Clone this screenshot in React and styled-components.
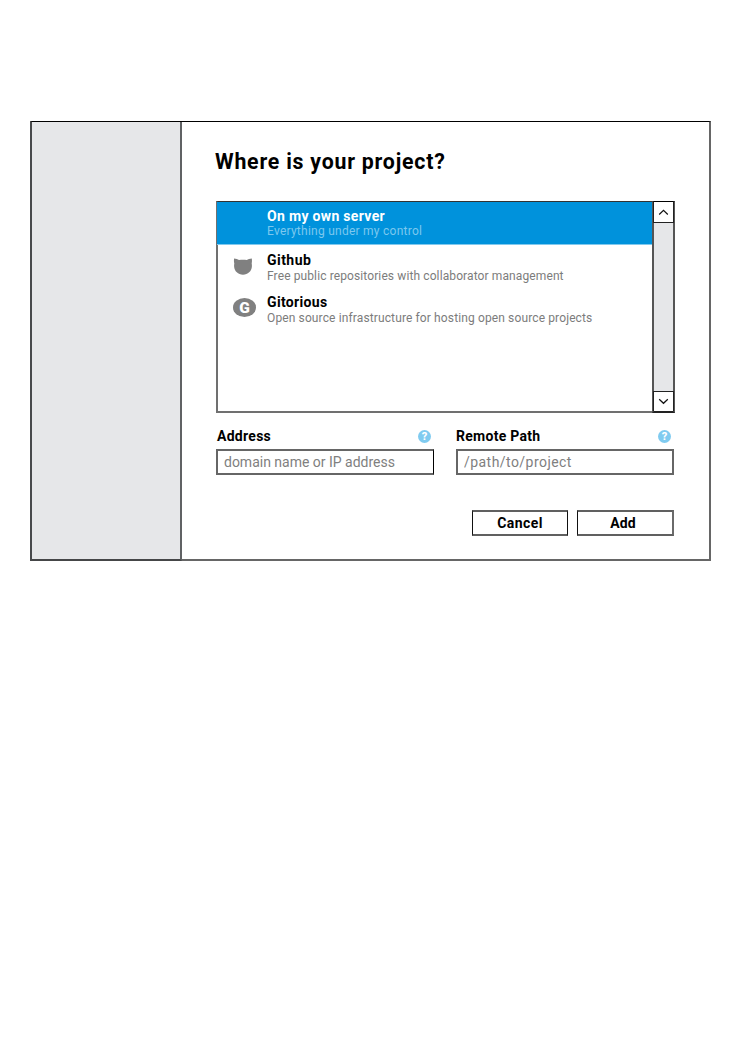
import React from "react";
import styled, { createGlobalStyle } from "styled-components";

const GlobalStyle = createGlobalStyle`
  *, *::before, *::after { box-sizing: border-box; }
  body { margin: 0; background: #fff; color: #000; font-family: Roboto, "Liberation Sans", sans-serif; }
`;

const Page = styled.main`
  padding: 121px 0 0 30px;
`;

const Dialog = styled.section`
  display: flex;
  width: 681px;
  height: 440px;
  border: solid #666;
  border-width: 1px 2px 2px;
  border-top-color: #000;
`;

const Sidebar = styled.aside`
  width: 152px;
  margin: 0 0 -2px -2px;
  background: #e6e7e9;
  border: 2px solid #606264;
  border-left-color: #484a4c;
  border-bottom-color: #454648;
  border-top: 0;
`;

const Content = styled.div`
  display: flex;
  flex-direction: column;
  width: 493px;
  padding: 27px 0 0 34px;
`;

const Title = styled.h1`
  margin: 0 0 26px -1px;
  font-size: 21.3px;
  line-height: 26px;
  font-weight: 700;
  letter-spacing: 0.78px;
  white-space: nowrap;
`;

const ListBox = styled.div`
  display: flex;
  height: 212px;
`;

const Options = styled.ul`
  flex: 1;
  margin: 0;
  padding: 0;
  list-style: none;
  border: solid #707070;
  border-width: 1px 0 2px 2px;
  border-top-color: #333;
`;

const Option = styled.li`
  display: grid;
  grid-template-columns: 49px 1fr;
  height: 42px;
  padding-top: 7px;
  color: #000;
  ${({ $selected }) =>
    $selected &&
    `
    height: 43px;
    margin-left: -1px;
    padding: 6px 0 0 1px;
    color: #fff;
    background: #0092dc;
    border-bottom: 1px solid #80c9ee;
  `}
`;

const OptionIcon = styled.div`
  padding: ${({ $pad }) => $pad || "0"};
  svg { display: block; }
`;

const OptionName = styled.div`
  font-size: 14px;
  line-height: 16px;
  font-weight: 700;
  letter-spacing: ${({ $tracking }) => $tracking}px;
`;

const OptionNote = styled.div`
  padding-top: ${({ $selected }) => ($selected ? 0 : 1)}px;
  font-size: 12px;
  line-height: 14px;
  letter-spacing: ${({ $tracking }) => $tracking}px;
  color: ${({ $selected }) => ($selected ? "#7cc8ee" : "#7c7c7c")};
  white-space: nowrap;
`;

const Scrollbar = styled.div`
  display: flex;
  flex-direction: column;
  justify-content: space-between;
  width: 23px;
  background: #e6e7e9;
  border: 2px solid #555;
  border-top: 1px solid #000;
  border-bottom-color: #222;
`;

const ScrollButton = styled.button`
  display: grid;
  place-items: center;
  height: ${({ $down }) => ($down ? 20 : 21)}px;
  margin: 0 -1px;
  padding: 0;
  background: #fff;
  border: solid #222;
  border-width: ${({ $down }) => ($down ? "1px 1px 0" : "0 1px 1px")};
`;

const Fields = styled.div`
  display: grid;
  grid-template-columns: 218px 218px;
  column-gap: 22px;
  padding-top: 15px;
`;

const FieldHead = styled.div`
  display: flex;
  justify-content: space-between;
  align-items: center;
  height: 16px;
  margin-bottom: 5px;
  padding: 0 3px 0 ${({ $inset }) => $inset}px;
`;

const Label = styled.label`
  font-size: 14px;
  line-height: 16px;
  font-weight: 700;
  letter-spacing: 0.28px;
`;

const Input = styled.input`
  display: block;
  width: 218px;
  height: 26px;
  padding: 0 0 0 6px;
  background: #fff;
  border: 2px solid #666;
  border-right: ${({ $sharp }) => ($sharp ? "1px solid #000" : "2px solid #666")};
  border-radius: 0;
  outline: 0;
  font: 14px/20px Roboto, "Liberation Sans", sans-serif;
  letter-spacing: ${({ $tracking }) => $tracking}px;
  &::placeholder { color: #808080; opacity: 1; }
`;

const Actions = styled.div`
  display: flex;
  gap: 9px;
  padding: 35px 0 0 256px;
`;

const Button = styled.button`
  width: ${({ $wide }) => ($wide ? 97 : 96)}px;
  height: 26px;
  padding: 0 ${({ $wide }) => ($wide ? 4 : 0)}px 0 0;
  color: #000;
  background: #fff;
  border: solid #606060;
  border-width: 2px ${({ $wide }) => ($wide ? 2 : 1)}px 2px 1px;
  border-left-color: #111;
  border-right-color: ${({ $wide }) => ($wide ? "#6a6a6a" : "#111")};
  font: 700 14px/20px Roboto, "Liberation Sans", sans-serif;
  letter-spacing: ${({ $tracking }) => $tracking}px;
`;

const HelpDot = styled.span`
  display: grid;
  place-items: center;
  width: 13px;
  height: 13px;
  border-radius: 50%;
  background: #80cbf0;
  color: #fff;
  font-size: 11px;
  line-height: 13px;
  font-weight: 800;
`;

const CatIcon = () => (
  <svg width="20" height="18" viewBox="0 0 20 18">
    <path
      fill="#808080"
      d="M1.100.6C3 .8 4.800 1.300 6 2c2.400-.5 5.400-.5 7.800 0C15 1.300 16.800.8 18.800.6c.3 2 .2 3.600-.1 4.900.2 1 .3 2 .2 3-.3 4.700-4 8.200-8.900 8.200S1.400 13.200 1.100 8.500c-.1-1 0-2 .2-3C.9 4.200.8 2.600 1.100.6Z"
    />
  </svg>
);

const GitoriousBadge = styled.span`
  display: grid;
  place-items: center;
  width: 23px;
  height: 19px;
  border-radius: 50%;
  background: #808080;
  color: #fff;
  font-size: 15.5px;
  line-height: 20px;
  font-weight: 900;
`;

const Chevron = ({ down }) => (
  <svg width="11" height="7" viewBox="0 0 11 7" fill="none" stroke="#111" strokeWidth="1.2">
    <path d={down ? "M1.200 1.200 5.500 5.300 9.800 1.200" : "M1.200 5.500 5.500 1.400 9.800 5.500"} />
  </svg>
);

export default function App() {
  return (
    <>
      <GlobalStyle />
      <Page>
        <Dialog>
          <Sidebar />
          <Content>
            <Title>Where is your project?</Title>
            <ListBox>
              <Options>
                <Option $selected>
                  <OptionIcon />
                  <div>
                    <OptionName $tracking={0.32}>On my own server</OptionName>
                    <OptionNote $selected $tracking={0.25}>Everything under my control</OptionNote>
                  </div>
                </Option>
                <Option>
                  <OptionIcon $pad="6px 0 0 15px"><CatIcon /></OptionIcon>
                  <div>
                    <OptionName $tracking={0.45}>Github</OptionName>
                    <OptionNote $tracking={0.11}>Free public repositories with collaborator management</OptionNote>
                  </div>
                </Option>
                <Option>
                  <OptionIcon $pad="4px 0 0 15px"><GitoriousBadge>G</GitoriousBadge></OptionIcon>
                  <div>
                    <OptionName $tracking={0.34}>Gitorious</OptionName>
                    <OptionNote $tracking={0.125}>Open source infrastructure for hosting open source projects</OptionNote>
                  </div>
                </Option>
              </Options>
              <Scrollbar>
                <ScrollButton aria-label="Scroll up"><Chevron /></ScrollButton>
                <ScrollButton $down aria-label="Scroll down"><Chevron down /></ScrollButton>
              </Scrollbar>
            </ListBox>
            <Fields>
              <div>
                <FieldHead $inset={1}>
                  <Label htmlFor="address">Address</Label>
                  <HelpDot>?</HelpDot>
                </FieldHead>
                <Input id="address" $sharp $tracking={-0.01} placeholder="domain name or IP address" />
              </div>
              <div>
                <FieldHead $inset={0}>
                  <Label htmlFor="path">Remote Path</Label>
                  <HelpDot>?</HelpDot>
                </FieldHead>
                <Input id="path" $tracking={0.45} placeholder="/path/to/project" />
              </div>
            </Fields>
            <Actions>
              <Button $tracking={0.43}>Cancel</Button>
              <Button $wide $tracking={0.1}>Add</Button>
            </Actions>
          </Content>
        </Dialog>
      </Page>
    </>
  );
}
